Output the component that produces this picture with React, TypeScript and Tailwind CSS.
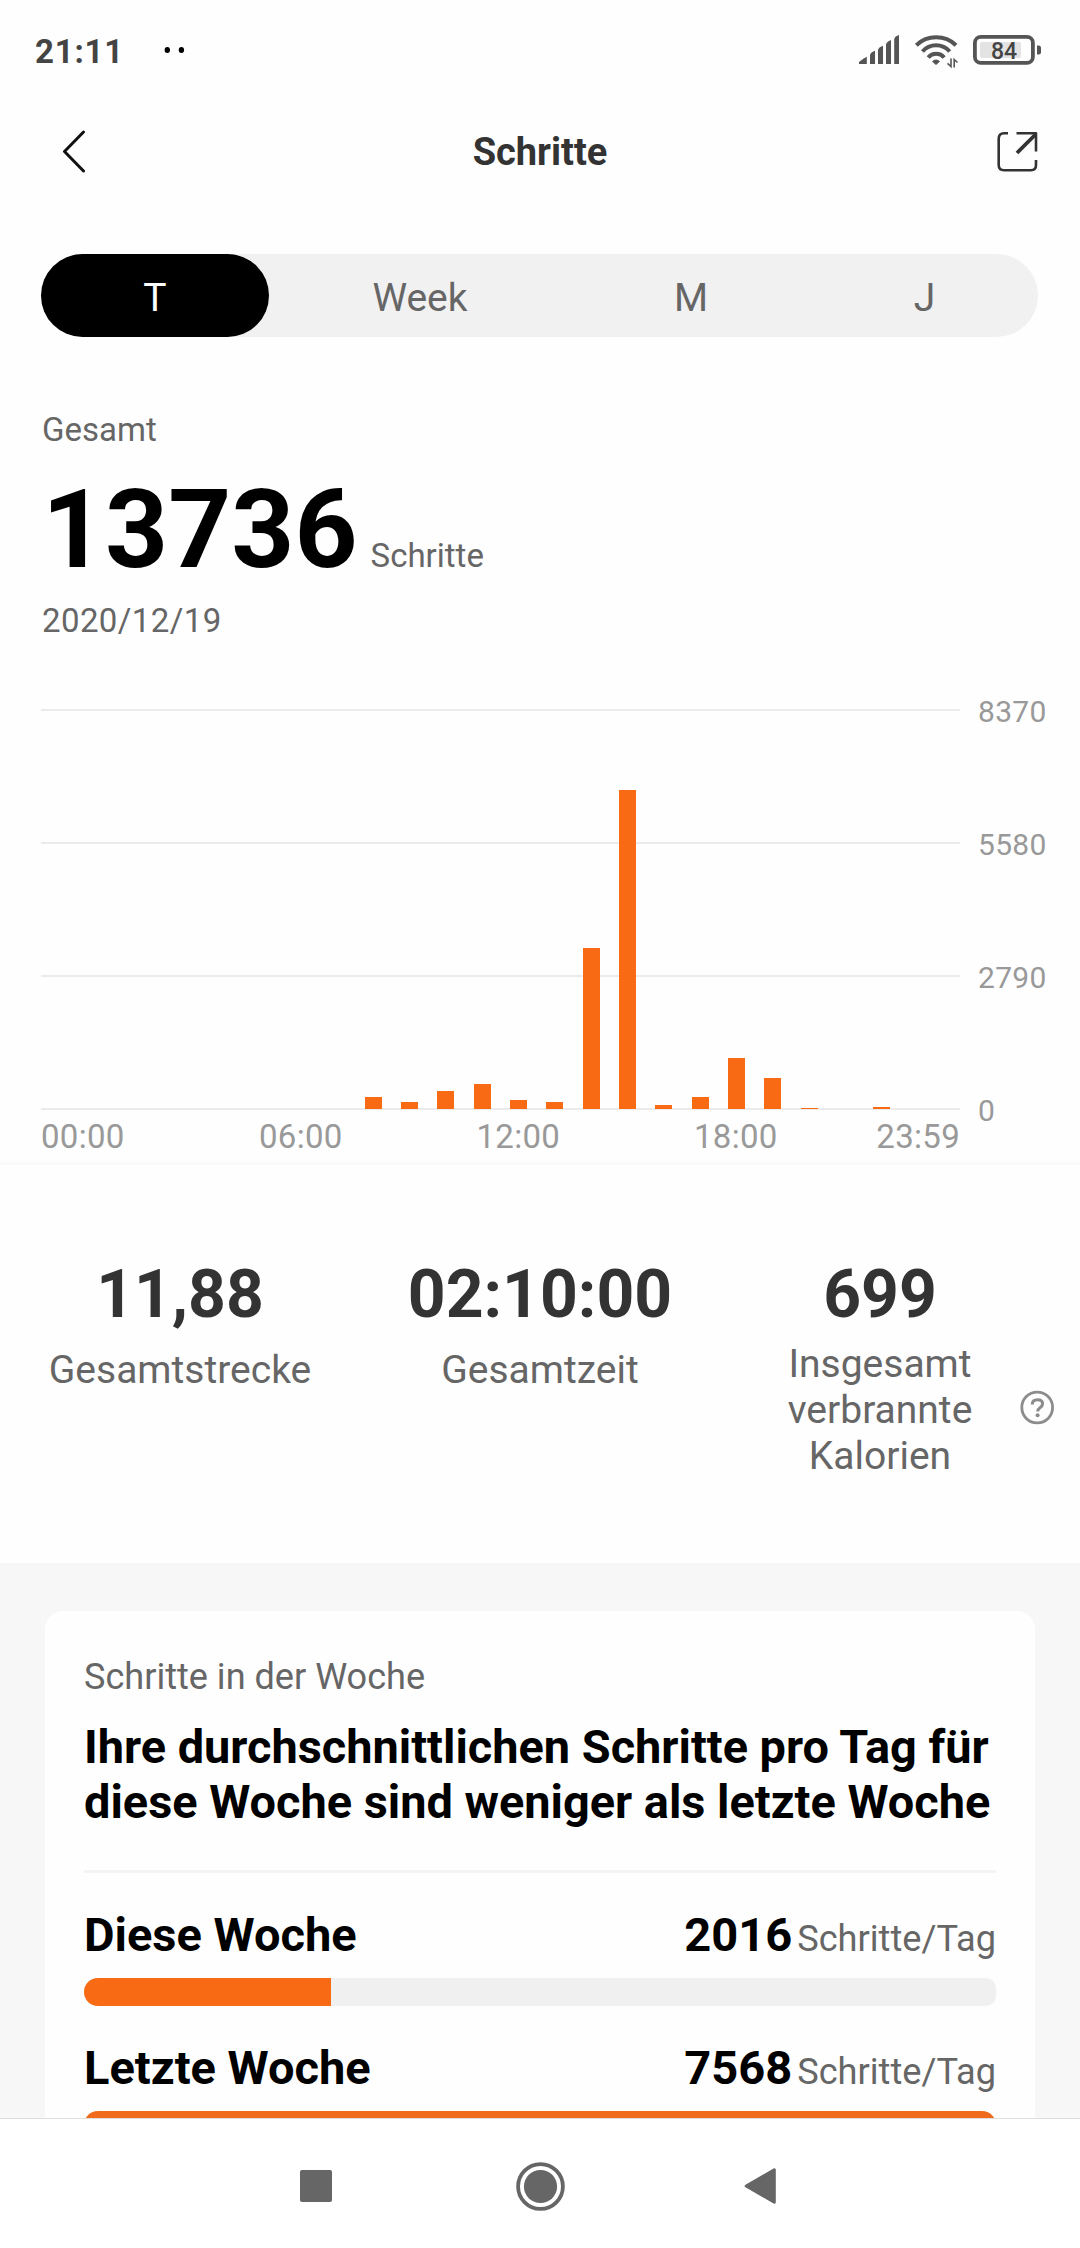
import React from "react";

const tabs = [
  { label: "T", width: "w-[228px]", active: true },
  { label: "Week", width: "w-[302px]", active: false },
  { label: "M", width: "w-[240px]", active: false },
  { label: "J", width: "w-[227px]", active: false },
];

// Bar height in pixels for each hour of the day.
const hourly = [0, 0, 0, 0, 0, 0, 0, 0, 12, 7, 18, 25, 9, 7, 161, 319, 4, 12, 51, 31, 1, 0, 2, 0];

function StatusBar() {
  return (
    <div className="flex h-[103px] shrink-0 items-start text-[#555555]">
      <div className="flex w-[129px] shrink-0">
        <span className="mt-8 ml-[35px] text-[33px] leading-[39px] font-bold tracking-[0.8px] text-[#444444]">21:11</span>
      </div>
      <svg className="mt-[45px] ml-[34px] h-[10px] w-[22px] text-black" viewBox="163 45 22 10" fill="currentColor">
        <ellipse cx="167.3" cy="50" rx="2.7" ry="3" />
        <ellipse cx="181.4" cy="50" rx="2.7" ry="3" />
      </svg>
      <div className="mt-[34px] ml-[673px] flex w-[222px] shrink-0">
        <svg className="h-9 w-[42px]" viewBox="858 34 42 36" fill="currentColor">
          <path d="M859 64V62Q861 60 866.8 56.8V64Z" />
          <path d="M870 64V54.5Q871 52 875 50.8V64Z" />
          <path d="M878 64V49.5Q879 47 883 45.8V64Z" />
          <path d="M886 64V44Q887 41.300 891 40V64Z" />
          <path d="M894.2 64V39Q895 36.200 899 35V64Z" />
        </svg>
        <svg className="ml-[13px] h-9 w-[46px]" viewBox="913 34 46 36" fill="none" stroke="currentColor" strokeWidth="4">
          <path d="M916.3 45.200A29 29 0 0 1 956 45.200" />
          <path d="M922.5 51.500A18 18 0 0 1 949.700 51.500" />
          <path d="M928.2 57.500A10.500 10.500 0 0 1 944.200 57.500" />
          <path d="M932 61.500Q936 57.500 940 61.500L936 65Z" fill="currentColor" stroke="none" />
          <path d="M951 58.500V66.500L947.500 63.300M954.200 67.500V59.500L957.500 62.500" strokeWidth="1.6" />
        </svg>
        <svg className="ml-[13px] h-9 w-[70px]" viewBox="972 34 70 36" fill="none">
          <rect x="980" y="42" width="41" height="16" rx="2" fill="#e3e3e3" />
          <rect x="974.900" y="36.900" width="58" height="26" rx="6" stroke="currentColor" strokeWidth="3.8" />
          <path d="M1037 45.500h1.500q2.500 0 2.500 2.500v4q0 2.500-2.500 2.500h-1.500z" fill="currentColor" />
          <text x="1004" y="59" textAnchor="middle" fontSize="23" fontWeight="500" fill="#444444">84</text>
        </svg>
      </div>
    </div>
  );
}

function Header() {
  return (
    <header className="flex h-[97px] shrink-0 items-center justify-between pr-[41px] pl-[60px]">
      <svg className="h-11 w-[43px]" viewBox="0 0 43 44" fill="none" stroke="#111111" strokeWidth="3" strokeLinecap="round" strokeLinejoin="round">
        <path d="M23.500 2L4.500 21.500L23.500 41" />
      </svg>
      <h1 className="-ml-[20px] text-[38px] leading-[46px] font-bold text-[#333333]">Schritte</h1>
      <svg className="h-[42px] w-[42px]" viewBox="0 0 42 42" fill="none" stroke="#333333" strokeWidth="2.6" strokeLinejoin="round">
        <path d="M11 2.300H7Q1.700 2.300 1.700 8V34Q1.700 39.200 7 39.200H34Q39 39.200 39 34V29" />
        <path d="M19.500 2.300H39V20.500" />
        <path d="M20 22L38.500 3.500" strokeWidth="3.800" />
      </svg>
    </header>
  );
}

function Chart() {
  return (
    <div className="mt-[68px] pl-[41px]">
      <div className="flex h-[401px]">
        <div className="relative flex w-[919px]">
          <div className="absolute inset-0 flex flex-col justify-between">
            {[0, 1, 2, 3].map((line) => (
              <div key={line} className="h-[2px] bg-[#ebebeb]" />
            ))}
          </div>
          <div className="relative flex flex-1 items-end px-[23.500px] pb-px">
            {hourly.map((height, hour) => (
              <div key={hour} className="flex flex-1 justify-center">
                <div className="w-[17px] bg-[#f96a14]" style={{ height }} />
              </div>
            ))}
          </div>
        </div>
        <div className="-mt-3 ml-[18px] flex h-[429px] flex-col justify-between text-[30px] leading-[30px] tracking-[0.3px] text-[#999999]">
          <span>8370</span>
          <span>5580</span>
          <span>2790</span>
          <span>0</span>
        </div>
      </div>
      <div className="mt-[7px] flex w-[919px] text-[33px] leading-[40px] tracking-[0.3px] text-[#999999]">
        <span className="w-[218px]">00:00</span>
        <span className="w-[217.500px]">06:00</span>
        <span className="w-[217.500px]">12:00</span>
        <span className="flex-1">18:00</span>
        <span>23:59</span>
      </div>
    </div>
  );
}

function Stats() {
  return (
    <section className="flex h-[398px] shrink-0 items-start pt-[91px] text-center text-[39px] leading-[46px] text-[#666666]">
      <div className="w-[360px]">
        <div className="text-[66px] leading-[78px] font-bold text-[#333333]">11,88</div>
        <div className="mt-[13px]">Gesamtstrecke</div>
      </div>
      <div className="w-[360px]">
        <div className="text-[66px] leading-[78px] font-bold text-[#333333]">02:10:00</div>
        <div className="mt-[13px]">Gesamtzeit</div>
      </div>
      <div className="ml-5 w-[280px]">
        <div className="text-[66px] leading-[78px] font-bold text-[#333333]">699</div>
        <div className="mt-[7px]">
          Insgesamt
          <br />
          verbrannte
          <br />
          Kalorien
        </div>
      </div>
      <svg className="mt-[134px] h-[35px] w-[35px]" viewBox="0 0 35 35" fill="none" stroke="#8c8c8c" strokeWidth="2.800">
        <circle cx="17.200" cy="17.500" r="15.400" />
        <path d="M12.300 14.500Q12.300 9.800 17.500 9.800Q22.600 9.800 22.600 13.800Q22.600 16 20 17.700Q17.700 19.200 17.700 21.500" strokeWidth="3" />
        <circle cx="17.600" cy="25.300" r="2" fill="#8c8c8c" stroke="none" />
      </svg>
    </section>
  );
}

function WeekRow({ label, value, children }: { label: string; value: string; children: React.ReactNode }) {
  return (
    <div className="mt-[34px]">
      <div className="flex h-[55px] items-baseline justify-between text-[47px] leading-[55px] font-bold text-black">
        <span>{label}</span>
        <span className="flex items-baseline gap-[5px]">
          {value}
          <span className="text-[36.200px] leading-[42px] font-normal text-[#666666]">Schritte/Tag</span>
        </span>
      </div>
      <div className="mt-4">{children}</div>
    </div>
  );
}

function NavBar() {
  return (
    <nav className="flex h-[130px] shrink-0 items-center border-t border-[#dedede] bg-white pt-[5px] text-[#666666]">
      <div className="ml-[300px] h-8 w-8 rounded-[2px] bg-[#666666]" />
      <svg className="ml-[184px] h-[49px] w-[49px]" viewBox="0 0 49 49" fill="none">
        <circle cx="24.500" cy="24.500" r="22.400" stroke="currentColor" strokeWidth="3.800" />
        <circle cx="24.500" cy="24.500" r="16.600" fill="currentColor" />
      </svg>
      <svg className="ml-[179px] h-9 w-8" viewBox="0 0 32 36" fill="currentColor" stroke="currentColor" strokeWidth="3" strokeLinejoin="round">
        <path d="M2.200 18L30.300 1.800V34.200Z" />
      </svg>
    </nav>
  );
}

export default function App() {
  return (
    <div className="flex h-[2248px] w-[1080px] flex-col overflow-hidden bg-[#fefefe] font-['Roboto',sans-serif]">
      <StatusBar />
      <Header />
      <div className="mt-[54px] ml-[41px] flex h-[83px] w-[997px] shrink-0 rounded-full bg-[#f1f1f1] text-[39px]">
        {tabs.map((tab) => (
          <div
            key={tab.label}
            className={`flex items-center justify-center rounded-full pt-[6px] ${tab.width} ${tab.active ? "bg-black text-white" : "text-[#666666]"}`}
          >
            {tab.label}
          </div>
        ))}
      </div>
      <div className="mt-[73px] shrink-0 pl-[42px] text-[33px] leading-[40px] text-[#666666]">
        <div>Gesamt</div>
        <div className="mt-[25px] flex h-[110px] items-baseline gap-[13px]">
          <span className="text-[110px] leading-[110px] font-bold text-black">13736</span>
          <span>Schritte</span>
        </div>
        <div className="mt-4 tracking-[0.4px]">2020/12/19</div>
      </div>
      <Chart />
      <div className="mt-[5px] h-[3px] shrink-0 bg-[#fafafa]" />
      <Stats />
      <div className="min-h-0 flex-1 overflow-hidden bg-[#f7f7f7] pt-12">
        <div className="mx-[45px] h-[700px] rounded-[18px] bg-[#fefefe] px-[39px] pt-[45px]">
          <div className="text-[36.100px] leading-[42px] text-[#666666]">Schritte in der Woche</div>
          <h2 className="mt-[21px] text-[46.900px] leading-[55px] font-bold text-black">
            Ihre durchschnittlichen Schritte pro Tag für
            <br />
            diese Woche sind weniger als letzte Woche
          </h2>
          <div className="mt-[41px] h-[3px] bg-[#f4f4f4]" />
          <WeekRow label="Diese Woche" value="2016">
            <div className="h-7 overflow-hidden rounded-l-[14px] rounded-r-[10px] bg-[#f0f0f0]">
              <div className="h-full w-[247px] bg-[#f96a14]" />
            </div>
          </WeekRow>
          <WeekRow label="Letzte Woche" value="7568">
            <div className="h-7 rounded-[14px] bg-[#f06c1c]" />
          </WeekRow>
        </div>
      </div>
      <NavBar />
    </div>
  );
}
